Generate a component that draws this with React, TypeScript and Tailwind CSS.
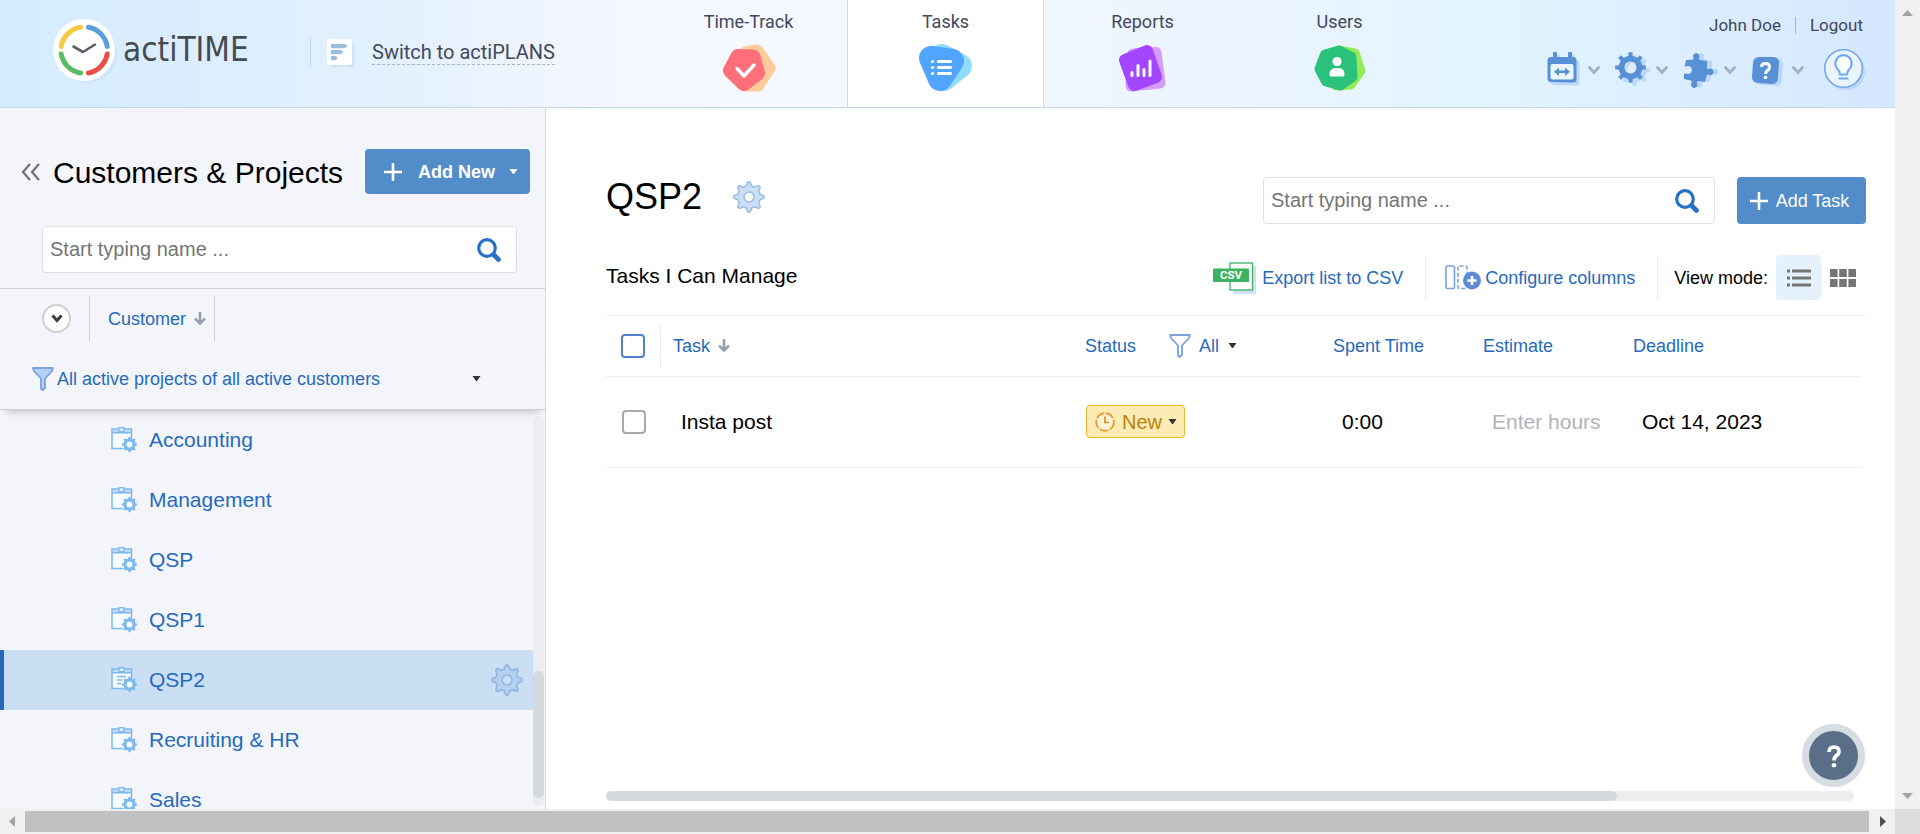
import React from "react";

const gear = (cx: number, cy: number, outer: number, inner: number, teeth: number, top = 0.2, base = 0.3) => {
  const step = (Math.PI * 2) / teeth;
  const pts: string[] = [];
  for (let i = 0; i < teeth; i++) {
    const a = i * step - Math.PI / 2;
    [
      [inner, -base],
      [outer, -top],
      [outer, top],
      [inner, base],
    ].forEach(([r, t]) => {
      pts.push(`${(cx + r * Math.cos(a + t * step)).toFixed(2)} ${(cy + r * Math.sin(a + t * step)).toFixed(2)}`);
    });
  }
  return `M${pts.join("L")}Z`;
};

function Logo() {
  return (
    <svg className="size-16 shrink-0" viewBox="0 0 64 64" aria-hidden="true">
      <circle cx="34" cy="34" r="30" fill="#cfe3fc" />
      <circle cx="31" cy="31" r="31" fill="#fff" />
      <g fill="none" strokeWidth="5" strokeLinecap="round">
        <path d="M8.2 27.5A23.3 23.3 0 0 1 27.5 8.2" stroke="#f9c940" />
        <path d="M35.5 8.2A23.3 23.3 0 0 1 54.2 27.5" stroke="#5a9fdc" />
        <path d="M54.2 35A23.3 23.3 0 0 1 35.5 54" stroke="#e94f43" />
        <path d="M27.5 54A23.3 23.3 0 0 1 8.2 35" stroke="#5aba66" />
      </g>
      <path d="M20.5 27.5L30 33L42 25.5" fill="none" stroke="#5c5e70" strokeWidth="2.6" strokeLinecap="round" strokeLinejoin="round" />
    </svg>
  );
}

function PlansIcon() {
  return (
    <svg className="h-7 w-7" viewBox="0 0 28 28" aria-hidden="true">
      <rect x="3" y="3" width="25" height="25" rx="3" fill="#cfe3fb" />
      <rect width="25" height="26" rx="3" fill="#fff" />
      <path d="M4 5h14l2.500 2-2.500 2.200H4zM4 11h10l2 2-2 2.200H4zM4 17h5l1.500 2L9 21.200H4z" fill="#9abddd" />
    </svg>
  );
}

function TimeTrackIcon() {
  return (
    <svg className="h-[50px] w-14" viewBox="0 0 56 50" aria-hidden="true">
      <path d="M25 10L36 8L48 25L37 42L26 42Z" fill="#ffcb9b" stroke="#ffcb9b" strokeWidth="13" strokeLinejoin="round" />
      <path d="M17 13.500L32 14L36.500 30L23 40.500L9.500 27.500Z" fill="#ff6f7a" stroke="#ff6f7a" strokeWidth="15" strokeLinejoin="round" />
      <path d="M16 25.500L23 33L33 22" fill="none" stroke="#fff" strokeWidth="3.400" strokeLinecap="round" strokeLinejoin="round" />
    </svg>
  );
}

function TasksIcon() {
  return (
    <svg className="h-[50px] w-14" viewBox="0 0 56 50" aria-hidden="true">
      <path d="M24 13L42 23L26 36Z" fill="#8fdcff" stroke="#8fdcff" strokeWidth="24" strokeLinejoin="round" />
      <path d="M13 15L34 18L22 36Z" fill="#51a4ff" stroke="#51a4ff" strokeWidth="24" strokeLinejoin="round" />
      <path d="M20.500 18.500H32.500M20.500 24.500H32.500M20.500 30.500H32.500M14.500 18.500h.1M14.500 24.500h.1M14.500 30.500h.1" stroke="#fff" strokeWidth="3.200" strokeLinecap="round" />
    </svg>
  );
}

function ReportsIcon() {
  return (
    <svg className="h-[50px] w-14" viewBox="0 0 56 50" aria-hidden="true">
      <path d="M18 11L41 9.500L45 40L16 43Z" fill="#d49cff" stroke="#d49cff" strokeWidth="11" strokeLinejoin="round" />
      <path d="M10 17L32 8L41 34L19 42Z" fill="#a445ff" stroke="#a445ff" strokeWidth="12" strokeLinejoin="round" />
      <path d="M17 29.500V32.500M23 22.500V32.500M29 26.500V32.500M35 18V32.500" stroke="#fff" strokeWidth="3" strokeLinecap="round" />
    </svg>
  );
}

function UsersIcon() {
  return (
    <svg className="h-[50px] w-14" viewBox="0 0 56 50" aria-hidden="true">
      <path d="M26 7L43 10L49 28L39 42L24 43L12 25Z" fill="#96e957" stroke="#96e957" strokeWidth="9" strokeLinejoin="round" />
      <path d="M27 7.500L39.500 14L40.500 34L28.500 42.500L14 38.500L7.500 26L13 11.500Z" fill="#2ac27b" stroke="#2ac27b" strokeWidth="10" strokeLinejoin="round" />
      <circle cx="25" cy="18.500" r="4.600" fill="#fff" />
      <path d="M17.500 31.500q0-6.500 6-6.500h3q6 0 6 6.500v.5q0 1.500-1.500 1.500H19q-1.500 0-1.500-1.500z" fill="#fff" />
    </svg>
  );
}

function CalendarIcon() {
  const d = "M4 5H6V1.5a2 2 0 0 1 4 0V5H21V1.5a2 2 0 0 1 4 0V5H26a3.5 3.5 0 0 1 3.500 3.500V27a3.500 3.500 0 0 1-3.500 3.500L4 30A3.500 3.500 0 0 1 .5 26.500V8.500A3.500 3.500 0 0 1 4 5Z";
  return (
    <svg className="h-9 w-9" viewBox="0 0 36 36" aria-hidden="true">
      <path d={d} fill="#bdd7fb" transform="translate(3 3)" />
      <path d={d} fill="#5890d6" />
      <rect x="3.500" y="12" width="23" height="15.500" rx="2" fill="#eaf5ff" />
      <path d="M7 19.700L12 15.500V18.500H18V15.500L23 19.700L18 24V21H12V24Z" fill="#5890d6" />
    </svg>
  );
}

function SettingsIcon() {
  const g = gear(15.5, 15.5, 15.5, 12, 8, 0.17, 0.22);
  return (
    <svg className="h-9 w-9" viewBox="0 0 36 36" aria-hidden="true">
      <path d={g} fill="#bdd7fb" transform="translate(4 3)" />
      <path d={g} fill="#5890d6" />
      <circle cx="15.500" cy="15.500" r="6" fill="#dceefe" />
      <path d="M12 20.500a6 6 0 0 1 6-10a9 9 0 0 0-6 10" fill="#bdd7fb" />
    </svg>
  );
}

function PuzzleIcon() {
  const d = "M3 8L10 7.500Q11 7.500 10.500 6A3.200 3.200 0 1 1 16 6Q15.500 8 17 8L24 9V16Q24 17.500 26 17A3.200 3.200 0 1 1 25.500 22.500Q23.500 22 23.500 23.500L22 30L15 29Q13.500 29 14 31A3.200 3.200 0 1 1 8.500 31Q9 29 8 28.500L1 27V22.500Q1 21 3 21.500A4 4 0 1 0 3 14.500Q1.500 15 2 13.500Z";
  return (
    <svg className="h-9 w-9" viewBox="0 0 36 36" aria-hidden="true">
      <path d={d} fill="#bdd7fb" transform="translate(5 0)" />
      <path d={d} fill="#5890d6" />
    </svg>
  );
}

function HelpIcon() {
  const d = "M8 1L22 1Q28.500 1.500 28 7L27 22Q26.500 28 21 28L7 27Q1 26.500 1 21L2 7Q2.500 1 8 1Z";
  return (
    <svg className="h-9 w-9" viewBox="0 0 36 36" aria-hidden="true">
      <path d={d} fill="#bdd7fb" transform="translate(4 6)" />
      <path d={d} fill="#5890d6" transform="translate(0 4)" />
      <path d="M10.500 15Q10.500 11.500 14.500 11.500T18.500 15Q18.500 17 16.500 18.500Q14.500 20 14.500 22" fill="none" stroke="#fff" strokeWidth="3" />
      <circle cx="14.500" cy="25.500" r="1.800" fill="#fff" />
    </svg>
  );
}

function BulbIcon() {
  return (
    <svg className="h-11 w-11" viewBox="0 0 44 44" aria-hidden="true">
      <circle cx="23" cy="23.500" r="19" fill="#bdd7fb" />
      <circle cx="20.500" cy="20.500" r="18.800" fill="#e9f4ff" stroke="#6ea9f0" strokeWidth="1.600" />
      <path d="M17 26.500Q17 23.500 15 21.500A8.200 8.200 0 1 1 26 21.500Q24 23.500 24 26.500Z" fill="#fff" stroke="#6ea9f0" strokeWidth="2.200" strokeLinejoin="round" />
      <path d="M16.500 30.500H24.500" stroke="#6ea9f0" strokeWidth="2.200" strokeLinecap="round" />
    </svg>
  );
}

function Chevron() {
  return (
    <svg className="h-3 w-3" viewBox="0 0 12 12" aria-hidden="true">
      <path d="M1.500 3.500L6 8.500L10.500 3.500" fill="none" stroke="#a3b0bf" strokeWidth="2.800" strokeLinecap="round" />
    </svg>
  );
}

function Caret({ className }: { className: string }) {
  return (
    <svg className={className} viewBox="0 0 8 5" aria-hidden="true">
      <path d="M0 0H8L4.500 5h-1Z" fill="currentColor" />
    </svg>
  );
}

function SearchIcon() {
  return (
    <svg className="size-6" viewBox="0 0 24 24" aria-hidden="true">
      <circle cx="10" cy="10" r="8.300" fill="none" stroke="#2670c6" strokeWidth="3.200" />
      <path d="M17 17L21.500 21.500" stroke="#2670c6" strokeWidth="4.600" strokeLinecap="round" />
    </svg>
  );
}

function PlusIcon() {
  return (
    <svg className="size-[18px]" viewBox="0 0 18 18" aria-hidden="true">
      <path d="M9 0V18M0 9H18" stroke="#fff" strokeWidth="2.600" />
    </svg>
  );
}

function SoftGear({ fill, hole, line }: { fill: string; hole: string; line: string }) {
  return (
    <svg className="size-8" viewBox="0 0 32 32" aria-hidden="true">
      <path d={gear(16, 16, 15, 11.4, 8, 0.1, 0.3)} fill={fill} stroke={line} strokeWidth="1.600" strokeLinejoin="round" />
      <circle cx="16" cy="16" r="5" fill={hole} stroke={line} strokeWidth="1.600" />
    </svg>
  );
}

function Funnel({ fill }: { fill: string }) {
  return (
    <svg className="h-6 w-[22px] shrink-0" viewBox="0 0 22 24" aria-hidden="true">
      <path d="M1 1H21L20 4L13 11.500V21L10.500 23L9 21.500V11.500L2 4Z" fill={fill} stroke="#7aa2dd" strokeWidth="1.800" strokeLinejoin="round" />
    </svg>
  );
}

function SortArrow() {
  return (
    <svg className="h-[13px] w-3" viewBox="0 0 12 13" aria-hidden="true">
      <path d="M6 0V11M1 6.500L6 11.500L11 6.500" fill="none" stroke="#959fb0" strokeWidth="2.600" />
    </svg>
  );
}

function ProjectIcon({ open }: { open: boolean }) {
  return (
    <svg className="h-[26px] w-[27px] shrink-0" viewBox="0 0 27 26" aria-hidden="true">
      <path d="M1 2H20.500V16L14 21.500H1Z" fill="#f6fbff" />
      <path d="M1 2H20.500V5.500H1Z" fill="#bcdcf7" />
      <path d="M20.500 13V2H1V21.500H12M1 5.700H20.500" fill="none" stroke="#7db9ec" strokeWidth="1.500" />
      <rect x="8" y=".7" width="5" height="4" fill="#dceefc" stroke="#7db9ec" strokeWidth="1.300" />
      {open && <path d="M6 9.500H15M6 13H11M6 16.500H10" stroke="#7db9ec" strokeWidth="1.500" />}
      <path d={gear(18.5, 17.5, 7.8, 6.2, 8, 0.14, 0.28)} fill="#7db9ec" />
      <circle cx="18.500" cy="17.500" r="3" fill="#f6fbff" />
    </svg>
  );
}

function CsvIcon() {
  return (
    <svg className="h-8 w-[43px] shrink-0" viewBox="0 0 43 32" aria-hidden="true">
      <rect x="20" y="4" width="23" height="28" fill="#cfe0f5" />
      <rect x="17" y="1" width="22.500" height="27" fill="#fff" stroke="#3bb361" strokeWidth="1.300" />
      <rect y="6.500" width="36" height="13.500" rx="1" fill="#3bb361" />
      <text x="18" y="17.200" textAnchor="middle" fill="#fff" fontSize="11.500" fontWeight="700" fontFamily="Roboto, sans-serif">
        CSV
      </text>
    </svg>
  );
}

function ColumnsIcon() {
  return (
    <svg className="h-[25px] w-9 shrink-0" viewBox="0 0 36 25" aria-hidden="true">
      <rect x="1" y="1" width="8.500" height="22.500" rx="1.500" fill="#fff" stroke="#7ba0de" strokeWidth="1.600" />
      <rect x="13" y="1" width="9" height="22.500" rx="1.500" fill="#fff" stroke="#7ba0de" strokeWidth="1.600" strokeDasharray="4 2" />
      <circle cx="27" cy="15.500" r="9" fill="#5d8bd6" />
      <path d="M27 11V20M22.500 15.500H31.500" stroke="#fff" strokeWidth="2.600" />
    </svg>
  );
}

const tabs = [
  { label: "Time-Track", icon: <TimeTrackIcon />, active: false },
  { label: "Tasks", icon: <TasksIcon />, active: true },
  { label: "Reports", icon: <ReportsIcon />, active: false },
  { label: "Users", icon: <UsersIcon />, active: false },
];

const tools = [
  { label: "Time off", icon: <CalendarIcon /> },
  { label: "Settings", icon: <SettingsIcon /> },
  { label: "Integrations", icon: <PuzzleIcon /> },
  { label: "Help", icon: <HelpIcon /> },
];

const projects = ["Accounting", "Management", "QSP", "QSP1", "QSP2", "Recruiting & HR", "Sales"];

function Header() {
  return (
    <header className="flex h-[108px] shrink-0 border-b border-[#c5d9ec] bg-[linear-gradient(90deg,#d4ebff_0%,#e3f1ff_21%,#f3f6ff_31%,#f5f9ff_42%,#eaf4ff_67%,#e2f5ff_78%,#d5e7ff_100%)] font-[Roboto,sans-serif] text-[#44475c]">
      <div className="flex w-[650px] shrink-0 items-start pt-[19px] pl-[53px]">
        <Logo />
        <span className="ml-1.5 pt-[9px] font-['DejaVu_Sans_Condensed','DejaVu_Sans',sans-serif] text-[33px] leading-[44px] text-[#454b4f]">actiTIME</span>
        <div className="mt-[19px] ml-auto flex h-[30px] items-center border-l border-[#bdd7f2] pl-4">
          <PlansIcon />
        </div>
        <a href="#plans" className="mt-[21px] mr-[95px] ml-[17px] border-b border-dashed border-[#a3b6cb] text-xl leading-6">
          Switch to actiPLANS
        </a>
      </div>
      <nav className="flex">
        {tabs.map((t) => (
          <a
            key={t.label}
            href={`#${t.label}`}
            aria-current={t.active ? "page" : undefined}
            className={`flex w-[197px] flex-col items-center border-x pt-2 ${t.active ? "border-[#c5d9ec] bg-white" : "border-transparent"}`}
          >
            <span className="text-lg leading-7">{t.label}</span>
            <span className="mt-[7px]">{t.icon}</span>
          </a>
        ))}
      </nav>
      <div className="ml-auto flex flex-col items-end pr-7">
        <div className="flex pt-[13px] pr-1 text-[17px] leading-6">
          <a href="#profile">John Doe</a>
          <span className="mx-3.5 mt-1 h-[17px] border-l border-[#a9b4c4]" />
          <a href="#logout">Logout</a>
        </div>
        <div className="mt-[11px] flex items-center">
          {tools.map((t) => (
            <button key={t.label} type="button" aria-label={t.label} className="flex w-[68px] items-center gap-[5px]">
              {t.icon}
              <Chevron />
            </button>
          ))}
          <button type="button" aria-label="What's new" className="ml-1">
            <BulbIcon />
          </button>
        </div>
      </div>
    </header>
  );
}

function SearchBox({ label, className }: { label: string; className: string }) {
  return (
    <div className={`flex h-[47px] items-center rounded border border-[#dedfe2] bg-white pr-[15px] pl-[7px] ${className}`}>
      <input type="text" aria-label={label} placeholder="Start typing name ..." className="h-full min-w-0 flex-1 text-xl outline-none placeholder:text-[#757575]" />
      <button type="button" aria-label="Search">
        <SearchIcon />
      </button>
    </div>
  );
}

function Sidebar() {
  return (
    <aside className="flex w-[546px] shrink-0 flex-col border-r border-[#d5dadf] bg-[#f3f5fa]">
      <div className="flex items-center pt-[41px] pr-[15px] pl-[21px]">
        <button type="button" aria-label="Collapse panel">
          <svg className="h-[18px] w-5" viewBox="0 0 20 18" aria-hidden="true">
            <path d="M9 1L2 9L9 17M18 1L11 9L18 17" fill="none" stroke="#6d7075" strokeWidth="2.200" />
          </svg>
        </button>
        <h1 className="ml-3 pt-[3px] text-[30px] leading-[42px] whitespace-nowrap text-black">Customers &amp; Projects</h1>
        <button type="button" className="ml-auto flex h-[45px] w-[165px] items-center rounded bg-[#528dca] pl-[19px] text-lg font-bold text-white">
          <PlusIcon />
          <span className="ml-4">Add New</span>
          <Caret className="ml-3.5 h-[5px] w-[9px]" />
        </button>
      </div>
      <SearchBox label="Search customers and projects" className="mt-8 mr-7 ml-[42px]" />
      <div className="mt-[15px] flex h-[60px] items-center border-t border-[#cdd0d5] pl-[42px]">
        <button type="button" aria-label="Expand all" className="flex size-[29px] items-center justify-center rounded-full border-2 border-[#cfcfcf] bg-white">
          <svg className="h-[9px] w-3" viewBox="0 0 12 9" aria-hidden="true">
            <path d="M1.500 1.500L6 6.500L10.500 1.500" fill="none" stroke="#3c3c3c" strokeWidth="3" />
          </svg>
        </button>
        <button type="button" className="ml-[18px] flex h-[45px] items-center gap-2 border-x border-[#cfd0d3] pr-2 pl-[18px] text-lg text-[#266abe]">
          Customer
          <SortArrow />
        </button>
      </div>
      <div className="relative z-10 flex h-[62px] items-center border-b border-[#cdd0d5] pl-8 shadow-[0_7px_8px_-6px_rgba(0,0,0,0.25)]">
        <Funnel fill="#b4d0f3" />
        <select aria-label="Project filter" className="ml-[3px] w-[430px] appearance-none bg-transparent text-lg text-[#266abe] outline-none">
          <option>All active projects of all active customers</option>
        </select>
        <Caret className="pointer-events-none absolute right-16 h-[5px] w-[9px] text-[#333]" />
      </div>
      <div className="flex min-h-0 flex-1">
        <ul className="min-w-0 flex-1 overflow-hidden">
          {projects.map((p) => {
            const on = p === "QSP2";
            return (
              <li key={p} className={`flex h-[60px] items-center border-l-4 pr-[10px] pl-[107px] ${on ? "border-[#266abe] bg-[#cadff4]" : "border-transparent"}`}>
                <ProjectIcon open={on} />
                <a href={`#${p}`} className="ml-[11px] text-[21px] text-[#266abe]">
                  {p}
                </a>
                {on && (
                  <button type="button" aria-label="Project settings" className="ml-auto">
                    <SoftGear fill="#b5d0ee" hole="#cadff4" line="#8fb5e0" />
                  </button>
                )}
              </li>
            );
          })}
        </ul>
        <div className="mt-1.5 mr-px mb-[3px] flex w-[11px] flex-col rounded-md bg-[#ebedf0]" aria-hidden="true">
          <div className="mt-auto mb-2 h-[127px] rounded-md bg-[#d4d9dd]" />
        </div>
      </div>
    </aside>
  );
}

function Box({ label, className }: { label: string; className: string }) {
  return <input type="checkbox" aria-label={label} className={`mx-auto block size-6 appearance-none rounded-sm border-2 bg-white ${className}`} />;
}

function Main() {
  return (
    <main className="relative flex min-w-0 flex-1 flex-col bg-white pr-[29px] pl-[60px] text-black">
      <div className="flex h-[116px] items-end">
        <div className="flex items-center pb-[3px]">
          <h2 className="text-[36px] leading-[48px]">QSP2</h2>
          <button type="button" aria-label="Project settings" className="ml-[31px]">
            <SoftGear fill="#cadff5" hole="#ffffff" line="#9dbde4" />
          </button>
        </div>
        <SearchBox label="Search tasks" className="ml-auto w-[452px]" />
        <button type="button" className="ml-[22px] flex h-[47px] w-[129px] items-center justify-center gap-2 rounded bg-[#528dca] pr-1 text-lg text-white">
          <PlusIcon />
          Add Task
        </button>
      </div>
      <div className="mt-[31px] flex h-[45px] items-center text-lg">
        <h3 className="pb-0.5 text-[21px]">Tasks I Can Manage</h3>
        <button type="button" className="ml-auto flex items-center gap-1.5 text-[#266abe]">
          <CsvIcon />
          Export list to CSV
        </button>
        <button type="button" className="ml-[22px] flex h-full items-center gap-1 border-x border-[#ebedf0] pr-[22px] pl-[19px] text-[#266abe]">
          <ColumnsIcon />
          Configure columns
        </button>
        <span className="ml-4">View mode:</span>
        <button type="button" aria-label="List view" className="ml-2 flex h-full w-[45px] items-center justify-center rounded bg-[#e5f2fd]">
          <svg className="h-[18px] w-6" viewBox="0 0 24 18" aria-hidden="true">
            <path d="M0 2H3M5 2H24M0 9H3M5 9H24M0 16H3M5 16H24" stroke="#757575" strokeWidth="3" />
          </svg>
        </button>
        <button type="button" aria-label="Board view" className="mr-[10px] ml-[9px]">
          <svg className="h-[18px] w-[26px]" viewBox="0 0 26 18" aria-hidden="true">
            <path d="M0 0h7.600v8H0zM9.200 0h7.600v8H9.200zM18.400 0H26v8h-7.600zM0 10h7.600v8H0zM9.200 10h7.600v8H9.200zM18.400 10H26v8h-7.600z" fill="#757575" />
          </svg>
        </button>
      </div>
      <div className="mt-[15px] border-t border-[#ebedee] pr-[5px]">
        <table className="w-full table-fixed text-left">
          <colgroup>
            <col className="w-[55px]" />
            <col />
            <col className="w-[248px]" />
            <col className="w-[150px]" />
            <col className="w-[150px]" />
            <col className="w-[241px]" />
          </colgroup>
          <thead className="border-b border-[#ebedee] text-lg text-[#266abe]">
            <tr className="h-[60px]">
              <th className="p-0 font-normal">
                <div className="flex h-[45px] items-center border-r border-[#ebedee]">
                  <Box label="Select all tasks" className="border-[#4f83c6]" />
                </div>
              </th>
              <th className="pl-3 font-normal">
                <span className="flex items-center gap-2">
                  Task
                  <SortArrow />
                </span>
              </th>
              <th className="pl-[13px] font-normal">
                <div className="flex items-center">
                  Status
                  <span className="ml-[33px] flex items-center gap-2">
                    <Funnel fill="#fff" />
                    <span className="relative flex items-center">
                      <select aria-label="Status filter" className="w-[38px] appearance-none bg-transparent outline-none">
                        <option>All</option>
                      </select>
                      <Caret className="pointer-events-none absolute right-0 h-[5px] w-[9px] text-[#333]" />
                    </span>
                  </span>
                </div>
              </th>
              <th className="pl-[13px] font-normal">Spent Time</th>
              <th className="pl-[13px] font-normal">Estimate</th>
              <th className="pl-[13px] font-normal">Deadline</th>
            </tr>
          </thead>
          <tbody className="text-[21px]">
            <tr className="h-[91px] border-b border-[#ebedee]">
              <td className="p-0">
                <Box label="Select Insta post" className="border-[#a9a9a9]" />
              </td>
              <td className="pl-5">Insta post</td>
              <td className="pl-[14px]">
                <span className="relative flex h-[33px] w-[99px] items-center rounded border border-[#edb92e] bg-[#fdebb5] pl-2 text-xl text-[#b98308]">
                  <svg className="size-5" viewBox="0 0 20 20" aria-hidden="true">
                    <circle cx="10" cy="10" r="8.800" fill="#fff3d6" stroke="#e2a236" strokeWidth="1.900" strokeDasharray="9 1.500" />
                    <path d="M10 4.500V10.500H14" fill="none" stroke="#d98e1c" strokeWidth="1.700" />
                  </svg>
                  <select aria-label="Status" className="ml-[7px] w-[56px] appearance-none bg-transparent outline-none">
                    <option>New</option>
                  </select>
                  <Caret className="pointer-events-none absolute right-[7px] h-[5px] w-[9px] text-[#333]" />
                </span>
              </td>
              <td className="pl-[22px]">0:00</td>
              <td className="pl-[22px]">
                <input type="text" aria-label="Estimate" placeholder="Enter hours" className="w-[120px] outline-none placeholder:text-[#b0b3bd]" />
              </td>
              <td className="pl-[22px]">Oct 14, 2023</td>
            </tr>
          </tbody>
        </table>
      </div>
      <div className="mt-auto mr-3 mb-2 h-[10px] rounded-full bg-[#ebeeed]" aria-hidden="true">
        <div className="h-full w-[81%] rounded-full bg-[#d4d9dd]" />
      </div>
      <button
        type="button"
        aria-label="Open help"
        className="absolute right-[30px] bottom-[22px] flex size-[63px] items-center justify-center rounded-full border-[7px] border-[#d7dce3] bg-[#5b6e88]"
      >
        <svg className="h-6 w-4" viewBox="0 0 16 24" aria-hidden="true">
          <path d="M3 8Q3 3 8 3T13 7.500Q13 10 10.500 11.500Q8 13.500 8 16.500" fill="none" stroke="#fff" strokeWidth="3.600" />
          <circle cx="8" cy="21.300" r="2.300" fill="#fff" />
        </svg>
      </button>
    </main>
  );
}

export default function App() {
  return (
    <div className="flex h-screen flex-col overflow-hidden font-['Liberation_Sans',Arial,sans-serif]">
      <div className="flex min-h-0 flex-1">
        <div className="flex min-w-0 flex-1 flex-col">
          <Header />
          <div className="flex min-h-0 flex-1">
            <Sidebar />
            <Main />
          </div>
        </div>
        <div className="flex w-[25px] shrink-0 flex-col items-center justify-between bg-[#f0f0f0] pt-2.5 pb-2.5" aria-hidden="true">
          <svg className="h-1.5 w-[11px]" viewBox="0 0 11 6">
            <path d="M0 6L5.500 0L11 6Z" fill="#a3a3a3" />
          </svg>
          <svg className="h-1.5 w-[11px]" viewBox="0 0 11 6">
            <path d="M0 0L5.500 6L11 0Z" fill="#a3a3a3" />
          </svg>
        </div>
      </div>
      <div className="flex h-[25px] shrink-0 items-center bg-[#f0f0f0]" aria-hidden="true">
        <svg className="mr-2.5 ml-[9px] h-[11px] w-1.5" viewBox="0 0 6 11">
          <path d="M6 0V11L0 5.500Z" fill="#a3a3a3" />
        </svg>
        <div className="h-[21px] flex-1 bg-[#c1c1c1]" />
        <svg className="mr-[9px] ml-[11px] h-[11px] w-1.5" viewBox="0 0 6 11">
          <path d="M0 0V11L6 5.500Z" fill="#505050" />
        </svg>
        <div className="h-full w-[25px] bg-[#dcdcdc]" />
      </div>
    </div>
  );
}
